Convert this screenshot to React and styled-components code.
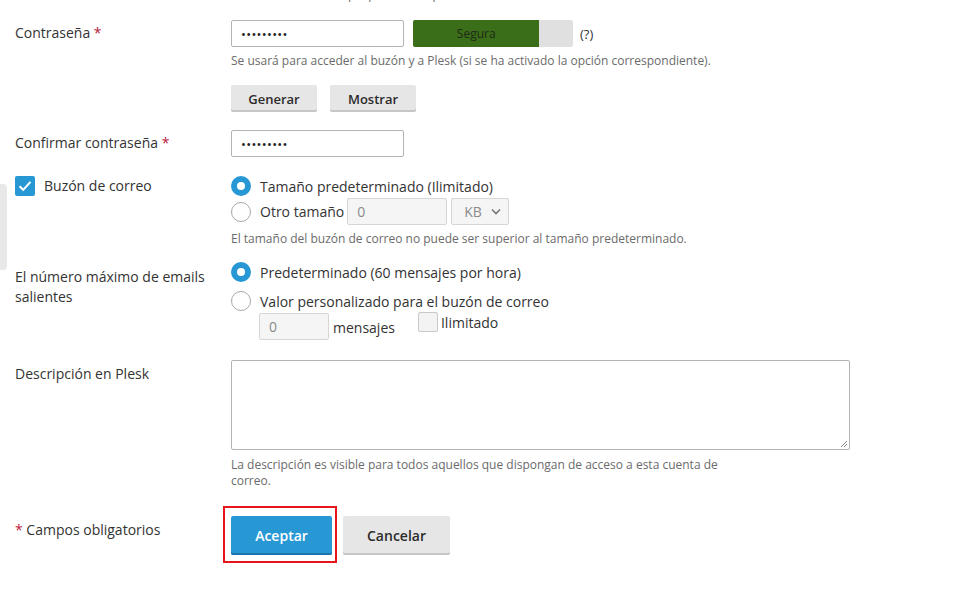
import React from "react";
import styled, { createGlobalStyle } from "styled-components";

const Global = createGlobalStyle`
  html, body { margin: 0; padding: 0; background: #fff; overflow: hidden; }
  body { font-family: "Open Sans", "Liberation Sans", sans-serif; color: #333; }
  * { box-sizing: border-box; }
`;

const Page = styled.div`
  position: relative;
  width: 969px;
  height: 598px;
  padding-left: 15px;
  overflow: hidden;
`;

const SideTab = styled.div`
  position: absolute;
  left: 0;
  top: 184px;
  width: 7px;
  height: 86px;
  background: #e8e8e8;
  border-radius: 0 4px 4px 0;
`;

const TopCut = styled.div`
  margin-top: -13px;
  margin-left: 216px;
`;

const Row = styled.div`
  display: flex;
  margin-top: ${(p) => p.$mt || 0}px;
`;

const Label = styled.div`
  width: 216px;
  flex-shrink: 0;
  font-size: 14px;
  line-height: 20px;
  padding-top: ${(p) => p.$pt ?? 4}px;
  display: flex;
  align-items: flex-start;
  gap: 9px;
`;

const Req = styled.span`
  color: #b81d3a;
`;

const Field = styled.div`
  flex: 1;
  display: flex;
  flex-direction: column;
`;

const Line = styled.div`
  display: flex;
  align-items: center;
  gap: ${(p) => p.$gap ?? 9}px;
  margin-top: ${(p) => p.$mt || 0}px;
  padding-left: ${(p) => p.$pl || 0}px;
  font-size: 14px;
  min-height: 20px;
`;

const Input = styled.div`
  width: ${(p) => p.$w || 173}px;
  height: 27px;
  border: 1px solid ${(p) => (p.$disabled ? "#d6d6d6" : "#b3b3b3")};
  background: ${(p) => (p.$disabled ? "#f5f5f5" : "#fff")};
  border-radius: 2px;
  display: flex;
  align-items: center;
  padding-left: 9px;
  font-size: 14px;
  color: ${(p) => (p.$disabled ? "#8a8a8a" : "#222")};
`;

const Dots = styled.span`
  font-size: 13px;
  letter-spacing: 0.3px;
  color: #222;
`;

const Strength = styled.div`
  width: 160px;
  height: 27px;
  background: #e0e0e0;
  border-radius: 2px;
  display: flex;
  overflow: hidden;
`;

const StrengthFill = styled.div`
  background: #3b6e18;
  display: flex;
  align-items: center;
  justify-content: center;
  font-size: 12px;
  color: #1f2a17;
`;

const Hint = styled.span`
  font-size: 13px;
  color: #333;
  margin-left: -2px;
`;

const Help = styled.div`
  font-size: 12px;
  line-height: 16px;
  color: #6b6b6b;
  margin-top: ${(p) => p.$mt ?? 6}px;
  max-width: ${(p) => p.$max || 700}px;
`;

const Btn = styled.button`
  font-family: "Open Sans", "Liberation Sans", sans-serif;
  height: ${(p) => p.$h || 27}px;
  padding: 0;
  border: none;
  border-radius: 2px;
  font-size: ${(p) => p.$fs || 13}px;
  font-weight: 600;
  cursor: pointer;
  background: ${(p) => (p.$primary ? "#2898d5" : "#e6e6e6")};
  color: ${(p) => (p.$primary ? "#fff" : "#2b2b2b")};
  box-shadow: inset 0 -2px 0 ${(p) => (p.$primary ? "#1c76ad" : "#c7c7c7")};
  width: ${(p) => p.$w}px;
  flex-shrink: 0;
`;

const Check = styled.span`
  width: 20px;
  height: 20px;
  border-radius: 2px;
  flex-shrink: 0;
  background: ${(p) => (p.$on ? "#2898d5" : "#f3f3f3")};
  border: ${(p) => (p.$on ? "none" : "1px solid #c9c9c9")};
  display: flex;
  align-items: center;
  justify-content: center;
`;

const Radio = styled.span`
  width: 20px;
  height: 20px;
  border-radius: 50%;
  flex-shrink: 0;
  background: #fff;
  border: ${(p) => (p.$on ? "6px solid #2898d5" : "1px solid #a8a8a8")};
`;

const Select = styled.div`
  width: 58px;
  height: 27px;
  border: 1px solid #d6d6d6;
  background: #f5f5f5;
  border-radius: 2px;
  display: flex;
  align-items: center;
  justify-content: space-between;
  padding: 0 7px 0 12px;
  font-size: 14px;
  color: #8a8a8a;
`;

const TextArea = styled.div`
  position: relative;
  width: 619px;
  height: 90px;
  border: 1px solid #b3b3b3;
  border-radius: 2px;
  background: #fff;
`;

const Grip = styled.svg`
  position: absolute;
  right: 1px;
  bottom: 1px;
`;

const Footer = styled.div`
  display: flex;
  align-items: flex-start;
  gap: 6px;
  margin-left: -8px;
`;

const Highlight = styled.div`
  border: 2px solid #e8141b;
  padding: 8px 3px 6px 6px;
  display: flex;
`;

const Actions = styled.div`
  padding-top: 10px;
  display: flex;
`;

const Unlimited = styled.div`
  display: flex;
  align-items: center;
  gap: 3px;
  margin-left: 23px;
  align-self: flex-start;
  margin-top: -1px;
`;

export default function App() {
  return (
    <>
      <Global />
      <Page>
        <SideTab />
        <TopCut>
          <Help $mt={0}>Dirección de correo que podrá usar para acceder</Help>
        </TopCut>

        <Row $mt={17}>
          <Label $pt={3}>
            <span>
              Contraseña <Req>*</Req>
            </span>
          </Label>
          <Field>
            <Line>
              <Input>
                <Dots>•••••••••</Dots>
              </Input>
              <Strength>
                <StrengthFill style={{ width: "79%" }}>Segura</StrengthFill>
              </Strength>
              <Hint>(?)</Hint>
            </Line>
            <Help>
              Se usará para acceder al buzón y a Plesk (si se ha activado la
              opción correspondiente).
            </Help>
            <Line $mt={16} $gap={13}>
              <Btn $w={86}>Generar</Btn>
              <Btn $w={86}>Mostrar</Btn>
            </Line>
          </Field>
        </Row>

        <Row $mt={18}>
          <Label $pt={3}>
            <span>
              Confirmar contraseña <Req>*</Req>
            </span>
          </Label>
          <Field>
            <Input>
              <Dots>•••••••••</Dots>
            </Input>
          </Field>
        </Row>

        <Row $mt={19}>
          <Label $pt={0}>
            <Check $on>
              <svg width="14" height="12" viewBox="0 0 14 12">
                <path
                  d="M1.5 6.2 L5.2 9.8 L12.5 1.8"
                  fill="none"
                  stroke="#fff"
                  strokeWidth="2"
                />
              </svg>
            </Check>
            <span>Buzón de correo</span>
          </Label>
          <Field>
            <Line $mt={0}>
              <Radio $on />
              <span>Tamaño predeterminado (Ilimitado)</span>
            </Line>
            <Line $mt={2}>
              <Radio />
              <span style={{ marginRight: -6 }}>Otro tamaño</span>
              <Input $disabled $w={100}>
                0
              </Input>
              <Select style={{ marginLeft: -5 }}>
                <span>KB</span>
                <svg width="10" height="7" viewBox="0 0 10 7">
                  <path
                    d="M1 1.5 L5 5.5 L9 1.5"
                    fill="none"
                    stroke="#777"
                    strokeWidth="1.6"
                  />
                </svg>
              </Select>
            </Line>
            <Help>
              El tamaño del buzón de correo no puede ser superior al tamaño
              predeterminado.
            </Help>
          </Field>
        </Row>

        <Row $mt={15}>
          <Label $pt={5}>El número máximo de emails salientes</Label>
          <Field>
            <Line $mt={0}>
              <Radio $on />
              <span>Predeterminado (60 mensajes por hora)</span>
            </Line>
            <Line $mt={9}>
              <Radio />
              <span>Valor personalizado para el buzón de correo</span>
            </Line>
            <Line $pl={28} $gap={0} $mt={2}>
              <Input $disabled $w={70}>
                0
              </Input>
              <span style={{ marginLeft: 4, marginTop: 2 }}>mensajes</span>
              <Unlimited>
                <Check />
                <span>Ilimitado</span>
              </Unlimited>
            </Line>
          </Field>
        </Row>

        <Row $mt={20}>
          <Label $pt={4}>Descripción en Plesk</Label>
          <Field>
            <TextArea>
              <Grip width="9" height="9" viewBox="0 0 9 9">
                <path d="M8 2 L2 8 M8 5 L5 8" stroke="#888" strokeWidth="1" />
              </Grip>
            </TextArea>
            <Help $mt={7} $max={500}>
              La descripción es visible para todos aquellos que dispongan de
              acceso a esta cuenta de correo.
            </Help>
          </Field>
        </Row>

        <Row $mt={17}>
          <Label $pt={14}>
            <span>
              <Req>*</Req> Campos obligatorios
            </span>
          </Label>
          <Field>
            <Footer>
              <Highlight>
                <Btn $primary $h={39} $w={101} $fs={14}>
                  Aceptar
                </Btn>
              </Highlight>
              <Actions>
                <Btn $h={39} $w={107} $fs={14}>
                  Cancelar
                </Btn>
              </Actions>
            </Footer>
          </Field>
        </Row>
      </Page>
    </>
  );
}
